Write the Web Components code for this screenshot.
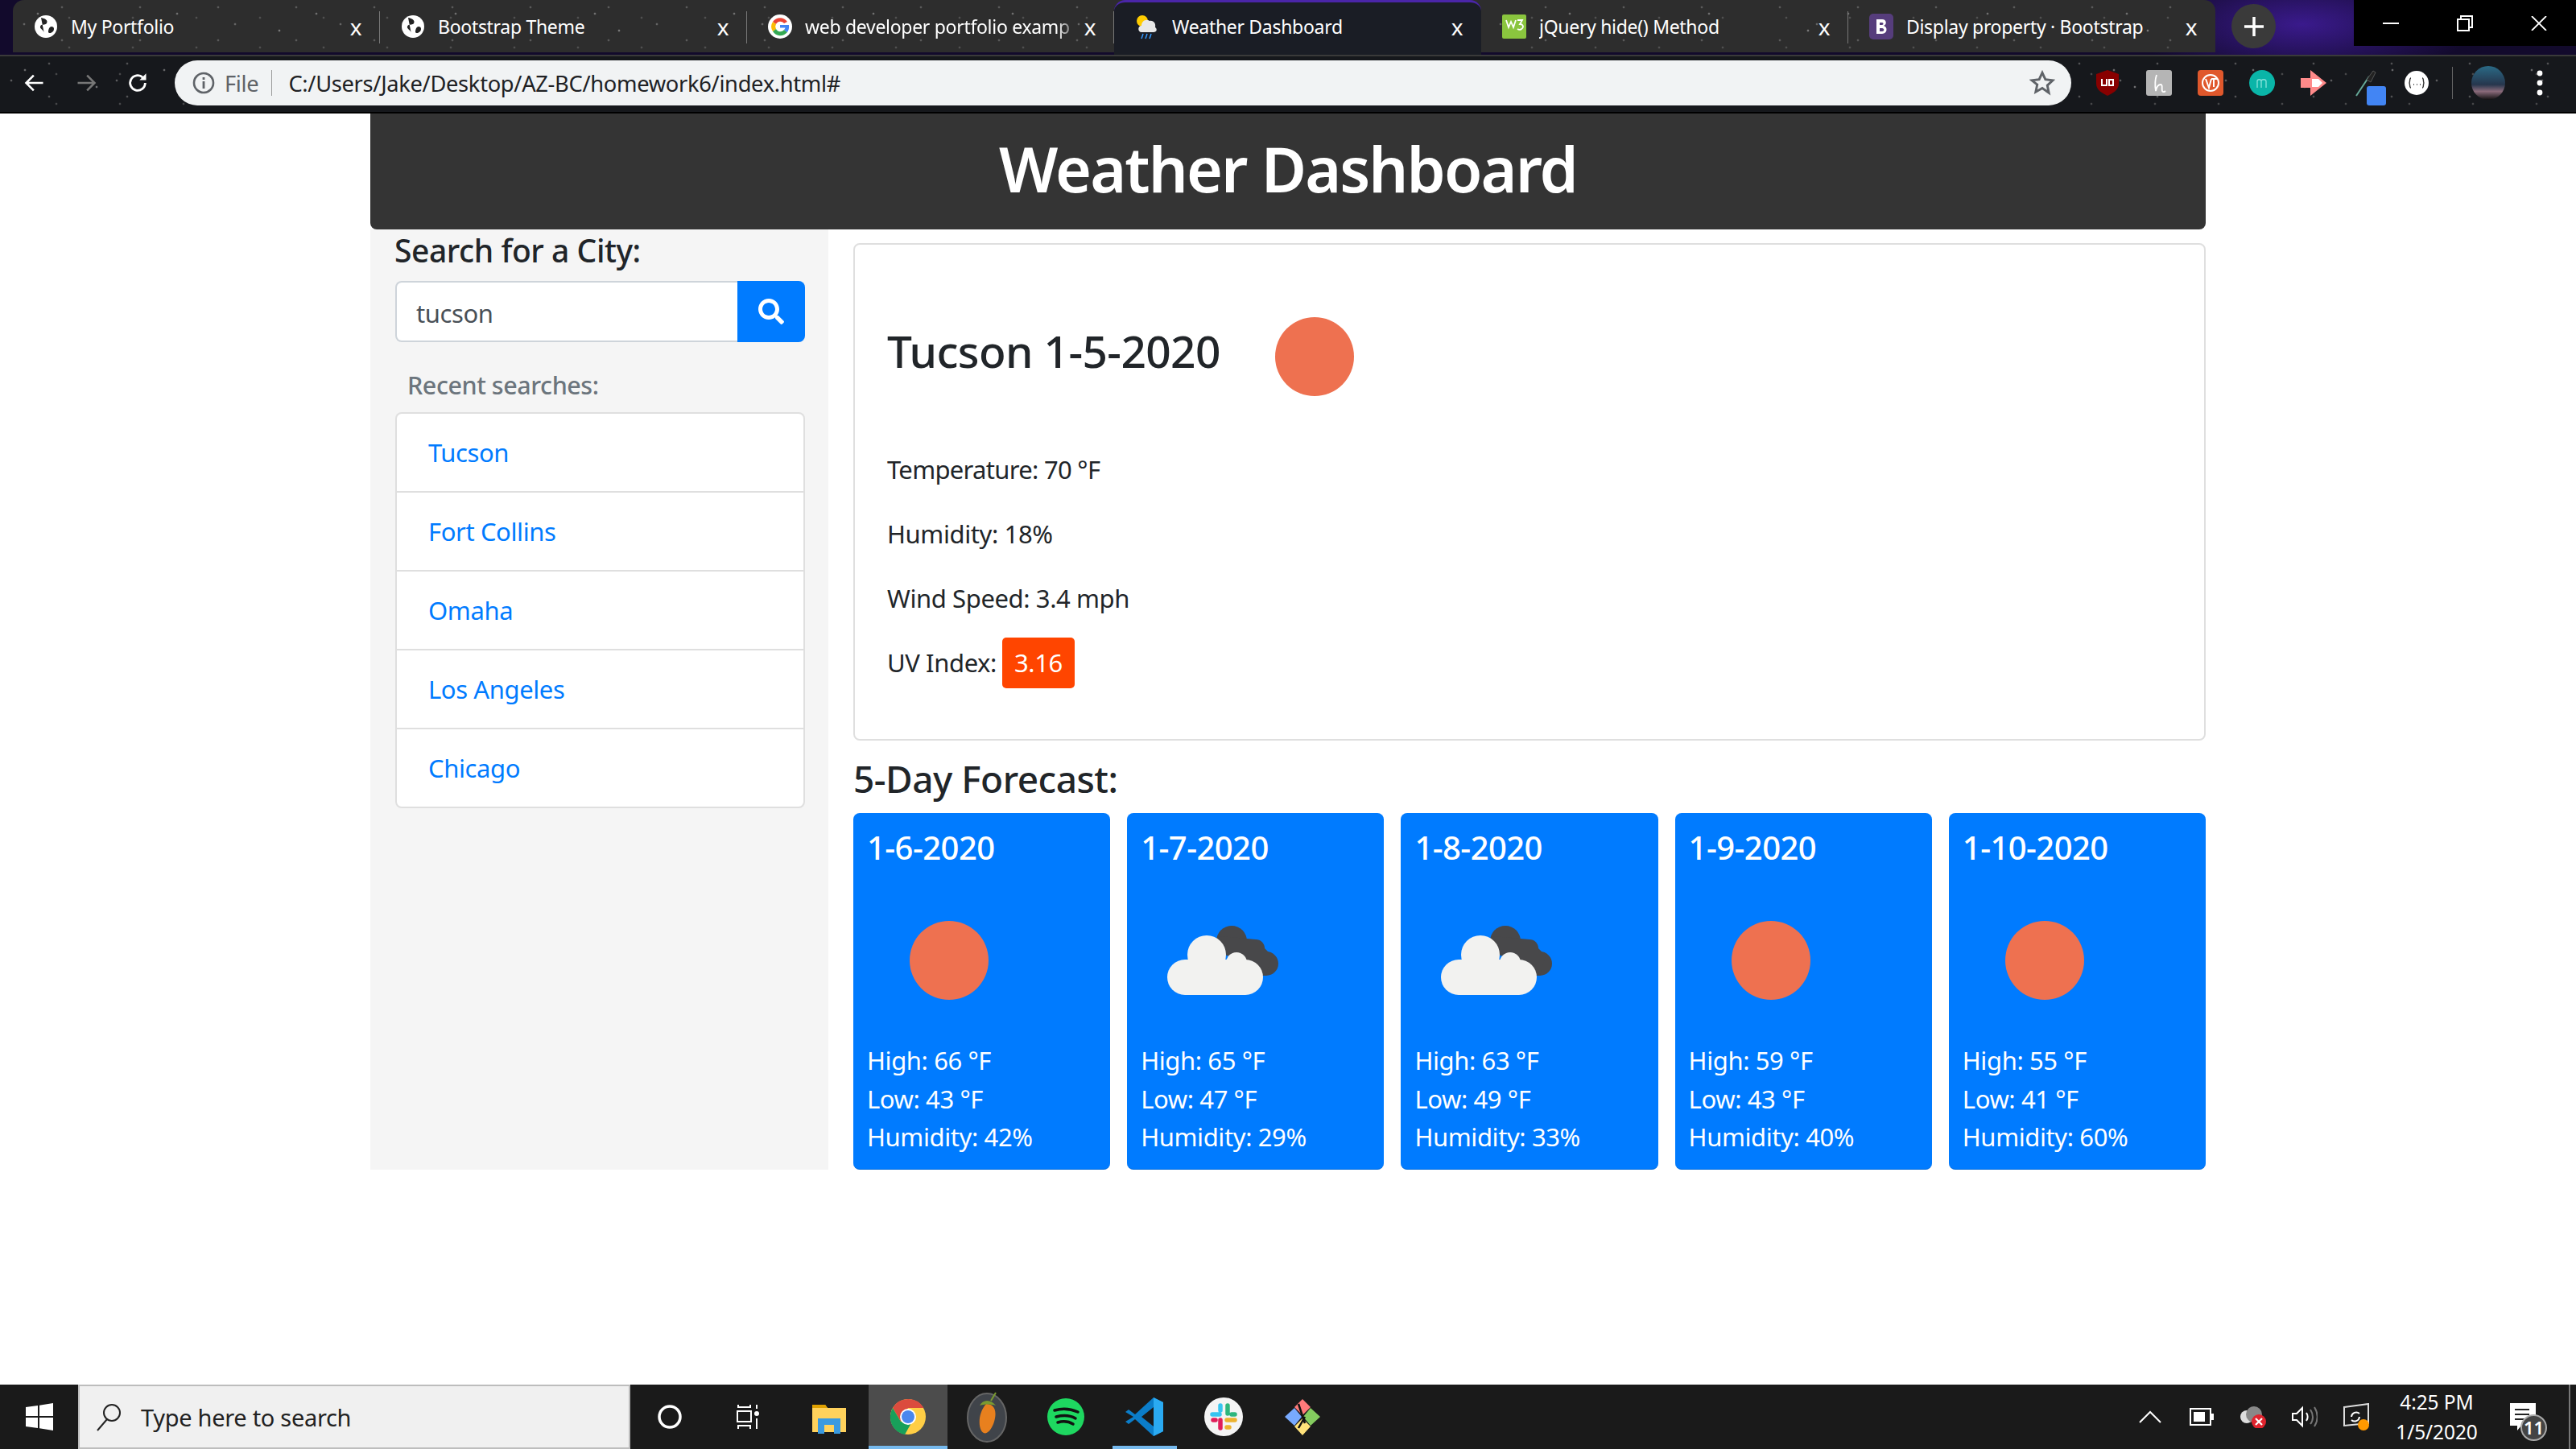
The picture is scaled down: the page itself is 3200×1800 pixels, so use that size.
<!doctype html>
<html>
<head>
<meta charset="utf-8">
<title>Weather Dashboard</title>
<style>
  html, body { margin: 0; height: 100%; }
  body { font-family: "Noto Sans", "Open Sans", sans-serif; color: #212529; background: #fff; overflow: hidden; display: flex; flex-direction: column; height: 1800px; }
  weather-app { flex: 1; }
</style>
</head>
<body>

<template id="browser-tab-template">
  <style>
    :host { display: flex; align-items: center; box-sizing: border-box; width: 456px; height: 65px; padding: 0 16px 0 26px; position: relative; color: #fff; font-size: 23px; letter-spacing: -.3px; }
    :host([active]) { background: #1a1d25; border-radius: 14px 14px 0 0; border-top: 3px solid #4a25a8; height: 68px; padding-bottom: 6px; }
    :host([fade]) .label { -webkit-mask-image: linear-gradient(90deg, #000 92%, transparent); mask-image: linear-gradient(90deg, #000 92%, transparent); }
    .icon { width: 30px; height: 30px; display: flex; flex: none; margin-right: 16px; align-items: center; }
    .label { flex: 1; white-space: nowrap; overflow: hidden; }
    .close { width: 28px; flex: none; text-align: center; font-size: 28px; line-height: 28px; }
    .sep { position: absolute; right: 0; top: 14px; height: 40px; width: 1px; background: #777; }
    :host([active]) .sep, :host([nosep]) .sep { display: none; }
  </style>
  <span class="icon"><slot name="icon"></slot></span>
  <span class="label"><slot></slot></span>
  <span class="close">x</span>
  <span class="sep"></span>
</template>

<template id="browser-chrome-template">
  <style>
    :host { display: block; background: #0f1013; }
    .tabs { display: flex; height: 68px; background: radial-gradient(ellipse 240px 80px at 2860px 30px, #3a1a8c, #120a2c 90%); padding-left: 16px; position: relative; box-sizing: border-box; }
    .strip { display: flex; height: 65px; background-color: #2d2d2d; border-radius: 14px 14px 0 0; background-image: var(--stars); background-size: var(--star-sizes); }
    .new { width: 55px; height: 55px; border-radius: 50%; background: #3a3a3a; margin: 5px 0 0 20px; color: #fff; display: flex; align-items: center; justify-content: center; }
    .win { margin-left: auto; display: flex; height: 57px; background: #000; }
    .win span { width: 92px; display: flex; align-items: center; justify-content: center; }
    .tool { display: flex; align-items: center; height: 71px; padding-bottom: 3px; background-color: #16181c; background-image: var(--stars); background-size: var(--star-sizes); border-top: 2px solid #3a3a3a; box-sizing: border-box; position: relative; padding-left: 11px; }
    .nav { width: 64px; height: 40px; display: flex; align-items: center; justify-content: center; }
    .bar { width: 2356px; height: 56px; margin-left: 14px; border-radius: 28px; background: #f1f3f4; display: flex; align-items: center; box-sizing: border-box; padding: 0 20px 0 22px; font-size: 27.3px; letter-spacing: -.32px; color: #202124; }
    .file { color: #5f6368; margin: 0 16px 0 12px; }
    .div { width: 1px; height: 32px; background: #9a9a9a; margin-right: 20px; }
    .url { flex: 1; white-space: nowrap; }
    .ext { display: flex; align-items: center; margin-left: 13px; }
    .ext span { width: 64px; height: 40px; display: flex; align-items: center; justify-content: center; position: relative; }
    .badge { position: absolute; width: 24px; height: 24px; left: 34px; top: 24px; background: #4285f4; border-radius: 3px; }
    .vsep { width: 1px; height: 40px; background: #666; margin: 0 22px 0 12px; }
    .line { height: 2px; background: #000; }
  </style>
  <div class="tabs">
    <div class="strip"><slot name="tabs"></slot></div>
    <div class="new"><svg width="26" height="26" viewBox="0 0 26 26"><path d="M13 1v24M1 13h24" stroke="#fff" stroke-width="3.5"/></svg></div>
    <div class="win">
      <span><svg width="20" height="4"><rect width="20" height="2" y="1" fill="#fff"/></svg></span>
      <span><svg width="20" height="20" viewBox="0 0 20 20"><path d="M1 5h14v14H1zM5 5V1h14v14h-4" fill="none" stroke="#fff" stroke-width="2"/></svg></span>
      <span><svg width="20" height="18" viewBox="0 0 20 18"><path d="M1 0l18 18M19 0L1 18" stroke="#fff" stroke-width="1.800"/></svg></span>
    </div>
  </div>
  <div class="tool">
    <span class="nav"><svg width="28" height="28" viewBox="0 0 24 24"><path d="M21 12H4M11 4l-8 8 8 8" fill="none" stroke="#fff" stroke-width="2.2"/></svg></span>
    <span class="nav"><svg width="28" height="28" viewBox="0 0 24 24"><path d="M3 12h17M13 4l8 8-8 8" fill="none" stroke="#777" stroke-width="2.2"/></svg></span>
    <span class="nav"><svg width="28" height="30" viewBox="0 0 24 24"><path d="M20 12a8 8 0 1 1-2.6-5.9" fill="none" stroke="#fff" stroke-width="2.4"/><path d="M21 2v7h-7z" fill="#fff"/></svg></span>
    <div class="bar">
      <svg width="28" height="28" viewBox="0 0 28 28"><circle cx="14" cy="14" r="12" fill="none" stroke="#5f6368" stroke-width="2.6"/><path d="M14 12v9M14 7v3" stroke="#5f6368" stroke-width="2.8"/></svg>
      <span class="file">File</span><span class="div"></span>
      <span class="url">C:/Users/Jake/Desktop/AZ-BC/homework6/index.html#</span>
      <svg width="32" height="32" viewBox="0 0 24 24"><path d="M12 2.5l2.9 6.3 6.9.8-5.1 4.7 1.4 6.8L12 16.9l-6.1 3.5 1.4-6.8L2.200 9.600l6.900-.8z" fill="none" stroke="#5f6368" stroke-width="2.200"/></svg>
    </div>
    <div class="ext">
      <span><svg width="30" height="32" viewBox="0 0 30 32"><path d="M15 0l14 5v12c0 8-8 12-14 15C9 29 1 25 1 17V5z" fill="#800"/><path d="M8 11v8h6v-8M17 12h5v7h-5z" fill="none" stroke="#fff" stroke-width="2"/></svg></span>
      <span><svg width="32" height="32" viewBox="0 0 32 32"><rect width="32" height="32" rx="3" fill="#b5b5b5"/><path d="M13 6c-2 6-2 14-1 20 1-5 3-8 6-8 3 0 1 6 2 8 1 2 3 1 4 0" fill="none" stroke="#fff" stroke-width="1.800"/></svg></span>
      <span><svg width="32" height="32" viewBox="0 0 32 32"><rect width="32" height="32" rx="4" fill="#e0582c"/><circle cx="16" cy="16" r="10" fill="none" stroke="#fff" stroke-width="2"/><path d="M10 11l4 11 3-11M17 11h7M20 11v10" fill="none" stroke="#fff" stroke-width="2"/></svg></span>
      <span><svg width="32" height="32" viewBox="0 0 32 32"><circle cx="16" cy="16" r="16" fill="#0ab5a8"/><path d="M10 22v-8c0-3 5-3 5 0v8M15 14c0-3 6-3 6 0v8" fill="none" stroke="#7fe0d8" stroke-width="1.400"/></svg></span>
      <span><svg width="32" height="32" viewBox="0 0 32 32"><path d="M0 10h12V0l20 16-20 16V22H0z" fill="#ff8a8a"/><path d="M14 11h8l5 5-5 5h-8z" fill="#fff"/></svg></span>
      <span><svg width="28" height="34" viewBox="0 0 28 34"><path d="M3 33L19 9" stroke="#6a9" stroke-width="2"/><path d="M16 13l8-11 3 2-6 12z" fill="#222" stroke="#555"/></svg><i class="badge"></i></span>
      <span><svg width="32" height="32" viewBox="0 0 32 32"><circle cx="16" cy="16" r="15" fill="#fff"/><path d="M9 10c-2 0-1 4-2 6 1 2 0 6 2 6M23 10c2 0 1 4 2 6-1 2 0 6-2 6M12 18h1M16 18h1M20 18h1" fill="none" stroke="#333" stroke-width="1.400"/></svg></span>
      <i class="vsep"></i>
      <span style="width:44px"><svg width="44" height="44" viewBox="0 0 44 44"><defs><linearGradient id="av" x1="0" y1="0" x2="0" y2="1"><stop offset="0" stop-color="#2a6a86"/><stop offset=".55" stop-color="#26364d"/><stop offset=".75" stop-color="#8a6a7a"/><stop offset="1" stop-color="#111"/></linearGradient></defs><circle cx="22" cy="22" r="21" fill="url(#av)"/></svg></span>
      <span style="width:84px"><svg width="8" height="34" viewBox="0 0 8 34"><circle cx="4" cy="5" r="3.400" fill="#fff"/><circle cx="4" cy="17" r="3.400" fill="#fff"/><circle cx="4" cy="29" r="3.400" fill="#fff"/></svg></span>
    </div>
  </div>
  <div class="line"></div>
</template>

<template id="weather-icon-template">
  <style>
    :host { display: block; width: 200px; height: 200px; flex: none; }
    svg { display: block; }
  </style>
  <svg id="pic" width="200" height="200" viewBox="0 0 200 200"></svg>
</template>

<template id="forecast-card-template">
  <style>
    :host { display: flex; flex-direction: column; box-sizing: border-box; background: #007bff; color: #fff; border-radius: 8px; padding: 20px 17px 0; height: 443px; border-bottom: 1px solid #0069d9; }
    .date { font-size: 40px; font-weight: 500; line-height: 46px; letter-spacing: -.55px; white-space: nowrap; }
    .pic { margin: 17px 0 0 2px; }
    .rows { font-size: 31px; line-height: 47.500px; letter-spacing: -.4px; margin-top: 1px; }
    .rows div { white-space: nowrap; }
  </style>
  <div class="date"></div>
  <div class="pic"><weather-icon></weather-icon></div>
  <div class="rows"><div class="hi"></div><div class="lo"></div><div class="hu"></div></div>
</template>

<template id="city-search-template">
  <style>
    :host { display: block; box-sizing: border-box; width: 569px; background: #f5f5f5; padding: 0 29px 0 31px; }
    h5 { font-size: 39px; font-weight: 500; line-height: 48px; margin: 2px 0 14px -1px; letter-spacing: -.45px; white-space: nowrap; }
    .group { display: flex; height: 76px; }
    .input { flex: 1; box-sizing: border-box; background: #fff; border: 2px solid #ced4da; border-right: 0; border-radius: 8px 0 0 8px; padding: 3px 24px 0; font-size: 31px; letter-spacing: -.4px; color: #495057; display: flex; align-items: center; }
    button { width: 84px; border: 0; padding: 0; background: #007bff; border-radius: 0 8px 8px 0; display: flex; align-items: center; justify-content: center; }
    .recent { color: #6c757d; font-size: 30.500px; font-weight: 500; letter-spacing: -.45px; line-height: 44px; margin: 31px 0 12px 15px; }
    .list { border: 2px solid rgba(0,0,0,.125); border-radius: 8px; background: #fff; }
    ::slotted(search-item:not(:last-child)) { border-bottom: 2px solid #dfdfdf; }
  </style>
  <h5>Search for a City:</h5>
  <div class="group">
    <div class="input">tucson</div>
    <button><svg width="32" height="32" viewBox="0 0 512 512"><path fill="#fff" d="M505 442.700L405.300 343c-4.500-4.500-10.600-7-17-7H372c27.600-35.300 44-79.700 44-128C416 93.100 322.900 0 208 0S0 93.100 0 208s93.100 208 208 208c48.300 0 92.700-16.400 128-44v16.300c0 6.400 2.500 12.500 7 17l99.700 99.700c9.400 9.400 24.600 9.400 33.900 0l28.300-28.300c9.400-9.400 9.400-24.600.1-34zM208 336c-70.700 0-128-57.200-128-128 0-70.700 57.200-128 128-128 70.700 0 128 57.200 128 128 0 70.700-57.200 128-128 128z"/></svg></button>
  </div>
  <div class="recent">Recent searches:</div>
  <div class="list"><slot></slot></div>
</template>

<template id="search-item-template">
  <style>
    :host { display: flex; align-items: center; box-sizing: border-box; height: 98px; padding-left: 39px; font-size: 31px; letter-spacing: -.4px; color: #007bff; }
    :host(:last-child) { height: 96px; }
  </style>
  <slot></slot>
</template>

<template id="current-weather-template">
  <style>
    :host { display: block; box-sizing: border-box; height: 618px; border: 2px solid rgba(0,0,0,.125); border-radius: 8px; padding: 0 40px; }
    .head { display: flex; align-items: center; box-sizing: border-box; height: 239px; padding-top: 39px; }
    h2 { font-size: 55px; font-weight: 500; margin: 0; letter-spacing: -.6px; white-space: nowrap; width: 482px; position: relative; top: -8px; }
    .sun { width: 98px; height: 98px; border-radius: 50%; background: #ee7150; }
    p { margin: 0; font-size: 31px; letter-spacing: -.4px; height: 80px; display: flex; align-items: center; white-space: nowrap; }
    .uv { background: #ff4500; color: #fff; border-radius: 5px; padding: 0 15px; height: 63px; display: inline-flex; align-items: center; margin-left: 7px; }
  </style>
  <div class="head"><h2>Tucson 1-5-2020</h2><div class="sun"></div></div>
  <p style="letter-spacing:-.7px">Temperature: 70 °F</p>
  <p>Humidity: 18%</p>
  <p>Wind Speed: 3.4 mph</p>
  <p>UV Index: <span class="uv">3.16</span></p>
</template>

<template id="weather-app-template">
  <style>
    :host { display: block; }
    .wrap { width: 2280px; margin-left: 460px; }
    header { box-sizing: border-box; background: #343434; color: #fff; height: 144px; padding-bottom: 8px; border-radius: 0 0 8px 8px; display: flex; align-items: center; justify-content: center; font-size: 77px; font-weight: 600; letter-spacing: -1.9px; }
    .row { display: flex; height: 1168px; }
    main { flex: 1; padding: 17px 0 0 31px; }
    h4 { font-size: 46px; font-weight: 500; letter-spacing: -.5px; line-height: 56px; margin: 19px 0 15px; }
    .days { display: grid; grid-template-columns: repeat(5, 1fr); gap: 21px; }
  </style>
  <div class="wrap">
    <header>Weather Dashboard</header>
    <div class="row">
      <slot name="side"></slot>
      <main>
        <slot name="now"></slot>
        <h4>5-Day Forecast:</h4>
        <div class="days"><slot name="days"></slot></div>
      </main>
    </div>
  </div>
</template>

<template id="task-bar-template">
  <style>
    :host { display: flex; height: 80px; flex: none; background: #1a1a1a; color: #fff; position: relative; }
    .start { width: 97px; display: flex; align-items: center; justify-content: center; }
    .search { width: 686px; box-sizing: border-box; background: #f0f0f0; border: 2px solid #bdbdbd; color: #222; font-size: 29px; letter-spacing: -.3px; display: flex; align-items: center; padding-left: 20px; gap: 22px; }
    .cell { width: 98px; height: 80px; display: flex; align-items: center; justify-content: center; position: relative; box-sizing: border-box; flex: none; }
    .cell.on { background: #4c4c4c; }
    .cell.on::after, .cell.run::after { content: ""; position: absolute; left: 0; right: 0; bottom: 0; height: 4px; background: #76b9ed; }
    .cell.run::after { left: 9px; right: 9px; }
    .tray { margin-left: auto; display: flex; align-items: center; }
    .tray span.t { width: 64px; display: flex; justify-content: center; }
    .clock { font-size: 24.500px; line-height: 37px; text-align: center; width: 136px; letter-spacing: -.1px; }
    .note { width: 78px; padding-right: 18px; height: 80px; display: flex; align-items: center; justify-content: center; position: relative; border-right: 2px solid #777; margin-right: 7px; }
    .count { position: absolute; left: 36px; top: 37px; box-sizing: border-box; width: 33px; height: 33px; line-height: 29px; border-radius: 50%; background: #444; border: 2px solid #aaa; text-align: center; font-size: 22px; font-weight: 600; }
  </style>
  <div class="start"><svg width="34" height="34" viewBox="0 0 34 34"><path d="M0 5l15-2v13H0zM17 2.700L34 0v16H17zM0 18h15v13L0 29zM17 18h17v16l-17-2.700z" fill="#fff"/></svg></div>
  <div class="search"><svg width="34" height="38" viewBox="0 0 34 38"><circle cx="20" cy="14" r="10" fill="none" stroke="#222" stroke-width="2"/><path d="M14 22L2 36" stroke="#222" stroke-width="2"/></svg><span>Type here to search</span></div>
  <div class="cell"><svg width="34" height="34" viewBox="0 0 34 34"><circle cx="17" cy="17" r="13" fill="none" stroke="#fff" stroke-width="3.500"/></svg></div>
  <div class="cell"><svg width="32" height="32" viewBox="0 0 32 32"><path d="M3 1v3h15V1M2 9h17v13H2zM3 31v-4h15v4" fill="none" stroke="#fff" stroke-width="2"/><circle cx="26" cy="12" r="3" fill="#fff"/><path d="M26 1v5M26 18v13" stroke="#fff" stroke-width="2"/></svg></div>
  <div class="cell" style="margin-left:2px"><svg width="44" height="44" viewBox="0 0 44 44"><path d="M1 7h16l3 4h23v30H1z" fill="#ffd25c"/><path d="M1 7h16l3 4H1z" fill="#e0a100"/><path d="M8 24h28v19h-8V32H16v11H8z" fill="#3a9ae0"/></svg></div>
  <div class="cell on"><svg width="46" height="46" viewBox="0 0 46 46"><circle cx="23" cy="23" r="22" fill="#ffce45"/><path d="M23 1a22 22 0 0 0-19 11l10 17 9-17h19.500A22 22 0 0 0 23 1z" fill="#db4b3e"/><path d="M4 12a22 22 0 0 0 15 33l9-16-14 0z" fill="#18a05a"/><circle cx="23" cy="23" r="10" fill="#fff"/><circle cx="23" cy="23" r="8" fill="#4a87ee"/></svg></div>
  <div class="cell"><svg width="50" height="64" viewBox="0 0 50 64"><ellipse cx="25" cy="33" rx="24" ry="30" fill="#40444a" stroke="#666" stroke-width="2"/><path d="M24 16c10 0 14 8 10 22-3 10-9 16-13 14-7-3-8-24 3-36z" fill="#e8801e"/><path d="M16 18c4-8 14-8 20 0-6-2-14-2-20 0z" fill="#7a9a30"/><path d="M30 12l6-10" stroke="#7a9a30" stroke-width="2"/></svg></div>
  <div class="cell"><svg width="46" height="46" viewBox="0 0 46 46"><circle cx="23" cy="23" r="23" fill="#1ed760"/><path d="M9 15c10-3 20-2 29 2M11 23c8-2 17-2 24 2M13 30c7-2 14-1 19 2" fill="none" stroke="#111" stroke-width="3.500" stroke-linecap="round"/></svg></div>
  <div class="cell run"><svg width="48" height="50" viewBox="0 0 48 50"><path d="M35 1l12 6v36l-12 6L12 28 4 34 0 31l10-6L0 19l4-3 8 6z" fill="#0b7dc9"/><path d="M35 1l12 6v36l-12 6z" fill="#2aaaf2"/><path d="M35 13v24L20 25z" fill="#1a1a1a"/></svg></div>
  <div class="cell"><svg width="48" height="48" viewBox="0 0 48 48"><circle cx="24" cy="24" r="24" fill="#f4f4f4"/><path d="M20 10v6M10 21h9" stroke="#36c5f0" stroke-width="5.500" stroke-linecap="round"/><path d="M29 10v10M34 21h4" stroke="#2eb67d" stroke-width="5.500" stroke-linecap="round"/><path d="M28 28h10M28 37h3" stroke="#ecb22e" stroke-width="5.500" stroke-linecap="round"/><path d="M20 28v10M11 28h3" stroke="#e01e5a" stroke-width="5.500" stroke-linecap="round"/></svg></div>
  <div class="cell"><svg width="48" height="48" viewBox="0 0 48 48"><path d="M24 2l10 10-10 10-10-10z" fill="#ff7a7a"/><path d="M34 13l12 11-12 11-9-11z" fill="#84cc5f"/><path d="M14 13l9 11-9 11L2 24z" fill="#78aaff"/><path d="M24 26l10 10-10 11-10-11z" fill="#ffe27a"/><path d="M19 8l8 24M27 24l-8 14" stroke="#111" stroke-width="2.500"/></svg></div>
  <div class="tray">
    <span class="t"><svg width="28" height="16" viewBox="0 0 28 16"><path d="M1 15L14 2l13 13" fill="none" stroke="#fff" stroke-width="2"/></svg></span>
    <span class="t"><svg width="30" height="22" viewBox="0 0 30 22"><rect x="1" y="1" width="25" height="20" fill="none" stroke="#fff" stroke-width="2"/><rect x="5" y="5" width="14" height="12" fill="#fff"/><rect x="27" y="7" width="3" height="8" fill="#fff"/></svg></span>
    <span class="t"><svg width="34" height="28" viewBox="0 0 34 28"><circle cx="9" cy="14" r="8" fill="#ddd"/><circle cx="18" cy="11" r="10" fill="#888"/><circle cx="24" cy="20" r="9" fill="#e0242e"/><path d="M20 16l8 8M28 16l-8 8" stroke="#fff" stroke-width="2.200"/></svg></span>
    <span class="t"><svg width="32" height="28" viewBox="0 0 32 28"><path d="M1 10h5l7-7v22l-7-7H1z" fill="none" stroke="#fff" stroke-width="2"/><path d="M18 9c2 3 2 7 0 10" fill="none" stroke="#fff" stroke-width="2"/><path d="M23 5c4 6 4 13 0 18M28 2c5 8 5 16 0 24" fill="none" stroke="#777" stroke-width="2"/></svg></span>
    <span class="t"><svg width="32" height="34" viewBox="0 0 32 34"><path d="M1 5l30-4v24l-30 3z" fill="none" stroke="#ddd" stroke-width="2"/><path d="M10 17a6 6 0 0 1 10-4M20 17a6 6 0 0 1-10 4" fill="none" stroke="#fff" stroke-width="2"/><circle cx="25" cy="27" r="7" fill="#f90"/></svg></span>
    <div class="clock">4:25 PM<br>1/5/2020</div>
    <div class="note"><svg width="32" height="34" viewBox="0 0 32 34"><path d="M0 0h32v28H14l-5 6v-6H0z" fill="#fff"/><path d="M6 8h18M6 14h18M6 20h14" stroke="#222" stroke-width="2"/></svg><span class="count">11</span></div>
  </div>
</template>

<browser-chrome>
  <browser-tab slot="tabs"><svg slot="icon" width="30" height="30" viewBox="0 0 30 30"><circle cx="15" cy="15" r="14" fill="#fff"/><path d="M9 4c5 1 9 3 7 7-2 3-7 0-8 4-1 3 5 4 5 9M22 15c3 0 4 3 2 6-2 2-5 3-6 1 0-3 1-7 4-7z" fill="#222"/></svg>My Portfolio</browser-tab>
  <browser-tab slot="tabs"><svg slot="icon" width="30" height="30" viewBox="0 0 30 30"><circle cx="15" cy="15" r="14" fill="#fff"/><path d="M9 4c5 1 9 3 7 7-2 3-7 0-8 4-1 3 5 4 5 9M22 15c3 0 4 3 2 6-2 2-5 3-6 1 0-3 1-7 4-7z" fill="#222"/></svg>Bootstrap Theme</browser-tab>
  <browser-tab slot="tabs" fade><svg slot="icon" width="30" height="30" viewBox="0 0 30 30"><circle cx="15" cy="15" r="15" fill="#fff"/><path d="M24 9a11 11 0 0 0-18 0l4 3a6 6 0 0 1 10-1z" fill="#ea4335"/><path d="M6 9a11 11 0 0 0 0 12l4-3a6 6 0 0 1 0-6z" fill="#fbbc05"/><path d="M6 21a11 11 0 0 0 18 1l-4-3a6 6 0 0 1-10-1z" fill="#34a853"/><path d="M15 13h11c.5 4-.5 7-2 9l-4-3c1-1 1-1.500 1.500-2.500H15z" fill="#4285f4"/></svg>web developer portfolio examp</browser-tab>
  <browser-tab slot="tabs" active><svg slot="icon" width="30" height="34" viewBox="0 0 30 34"><circle cx="9" cy="10" r="7" fill="#fc0"/><path d="M8 24c-5 0-5-8 0-8 0-6 6-9 10-6 5-1 8 3 7 8 3 2 2 6-2 6z" fill="#e8e8e8"/><path d="M10 26l-2 6M15 26l-2 6M20 26l-2 6" stroke="#39f" stroke-width="1.500"/></svg>Weather Dashboard</browser-tab>
  <browser-tab slot="tabs"><svg slot="icon" width="30" height="34" viewBox="0 0 30 34"><rect y="2" width="30" height="30" rx="2" fill="#8ac53e"/><path d="M5 9l3 9 3-7 3 7 3-9M19 9h6l-3 5c3 0 4 2 4 3 0 3-4 5-7 3" fill="none" stroke="#fff" stroke-width="1.800"/></svg>jQuery hide() Method</browser-tab>
  <browser-tab slot="tabs" nosep><svg slot="icon" width="30" height="34" viewBox="0 0 30 34"><rect y="1" width="30" height="32" rx="5" fill="#563d7c"/><path d="M9 8h7c6 0 6 7 2 8 5 1 5 10-2 10H9zM13 12v3h3c2 0 2-3 0-3zM13 19v4h3c3 0 3-4 0-4z" fill="#fff"/></svg>Display property · Bootstrap</browser-tab>
</browser-chrome>

<weather-app>
  <city-search slot="side">
    <search-item>Tucson</search-item>
    <search-item>Fort Collins</search-item>
    <search-item>Omaha</search-item>
    <search-item>Los Angeles</search-item>
    <search-item>Chicago</search-item>
  </city-search>
  <current-weather slot="now"></current-weather>
  <forecast-card slot="days" date="1-6-2020" high="66" low="43" humidity="42" icon="sun"></forecast-card>
  <forecast-card slot="days" date="1-7-2020" high="65" low="47" humidity="29" icon="cloud"></forecast-card>
  <forecast-card slot="days" date="1-8-2020" high="63" low="49" humidity="33" icon="cloud"></forecast-card>
  <forecast-card slot="days" date="1-9-2020" high="59" low="43" humidity="40" icon="sun"></forecast-card>
  <forecast-card slot="days" date="1-10-2020" high="55" low="41" humidity="60" icon="sun"></forecast-card>
</weather-app>

<task-bar></task-bar>

<script>
  // dotted backdrop for the browser theme, inherited into the shadow roots
  const dot = (x, y, c) => `radial-gradient(1.8px 1.8px at ${x}px ${y}px, ${c}, transparent)`;
  const stars = [[31, 17, '#9a9a9a', 173, 61], [120, 38, '#aaa', 211, 53], [61, 9, '#777', 97, 41], [14, 30, '#888', 131, 47], [70, 22, '#666', 79, 37]];
  document.documentElement.style.setProperty('--stars', stars.map(s => dot(s[0], s[1], s[2])).join(','));
  document.documentElement.style.setProperty('--star-sizes', stars.map(s => `${s[3]}px ${s[4]}px`).join(','));

  class Base extends HTMLElement {
    constructor() {
      super();
      const shadowRoot = this.attachShadow({mode: 'open'});
      const template = document.getElementById(this.localName + '-template');
      shadowRoot.appendChild(template.content.cloneNode(true));
    }
  }

  class WeatherIcon extends Base {
    set kind(k) {
      const pic = this.shadowRoot.getElementById('pic');
      if (k === 'sun') {
        pic.innerHTML = '<circle cx="100" cy="100" r="49" fill="#ee7150"/>';
      } else {
        pic.innerHTML = `
          <g fill="#48484a"><circle cx="111" cy="76" r="19"/><circle cx="141" cy="85" r="11"/><circle cx="154" cy="104" r="15"/><path d="M96 70l45 4 20 20-7 25h-30z"/></g>
          <g fill="#f2f2f0"><circle cx="80" cy="93" r="24"/><circle cx="53" cy="121" r="22"/><circle cx="128" cy="121" r="22"/><circle cx="117" cy="103" r="13"/><path d="M53 99h75v44H53z"/></g>`;
      }
    }
  }

  class ForecastCard extends Base {
    connectedCallback() {
      const r = this.shadowRoot;
      r.querySelector('.date').textContent = this.getAttribute('date');
      r.querySelector('.hi').textContent = `High: ${this.getAttribute('high')} °F`;
      r.querySelector('.lo').textContent = `Low: ${this.getAttribute('low')} °F`;
      r.querySelector('.hu').textContent = `Humidity: ${this.getAttribute('humidity')}%`;
      customElements.upgrade(r);
      r.querySelector('weather-icon').kind = this.getAttribute('icon');
    }
  }

  customElements.define('weather-icon', WeatherIcon);
  customElements.define('forecast-card', ForecastCard);
  ['browser-tab', 'browser-chrome', 'city-search', 'search-item', 'current-weather', 'weather-app', 'task-bar']
    .forEach(name => customElements.define(name, class extends Base {}));
</script>
</body>
</html>
